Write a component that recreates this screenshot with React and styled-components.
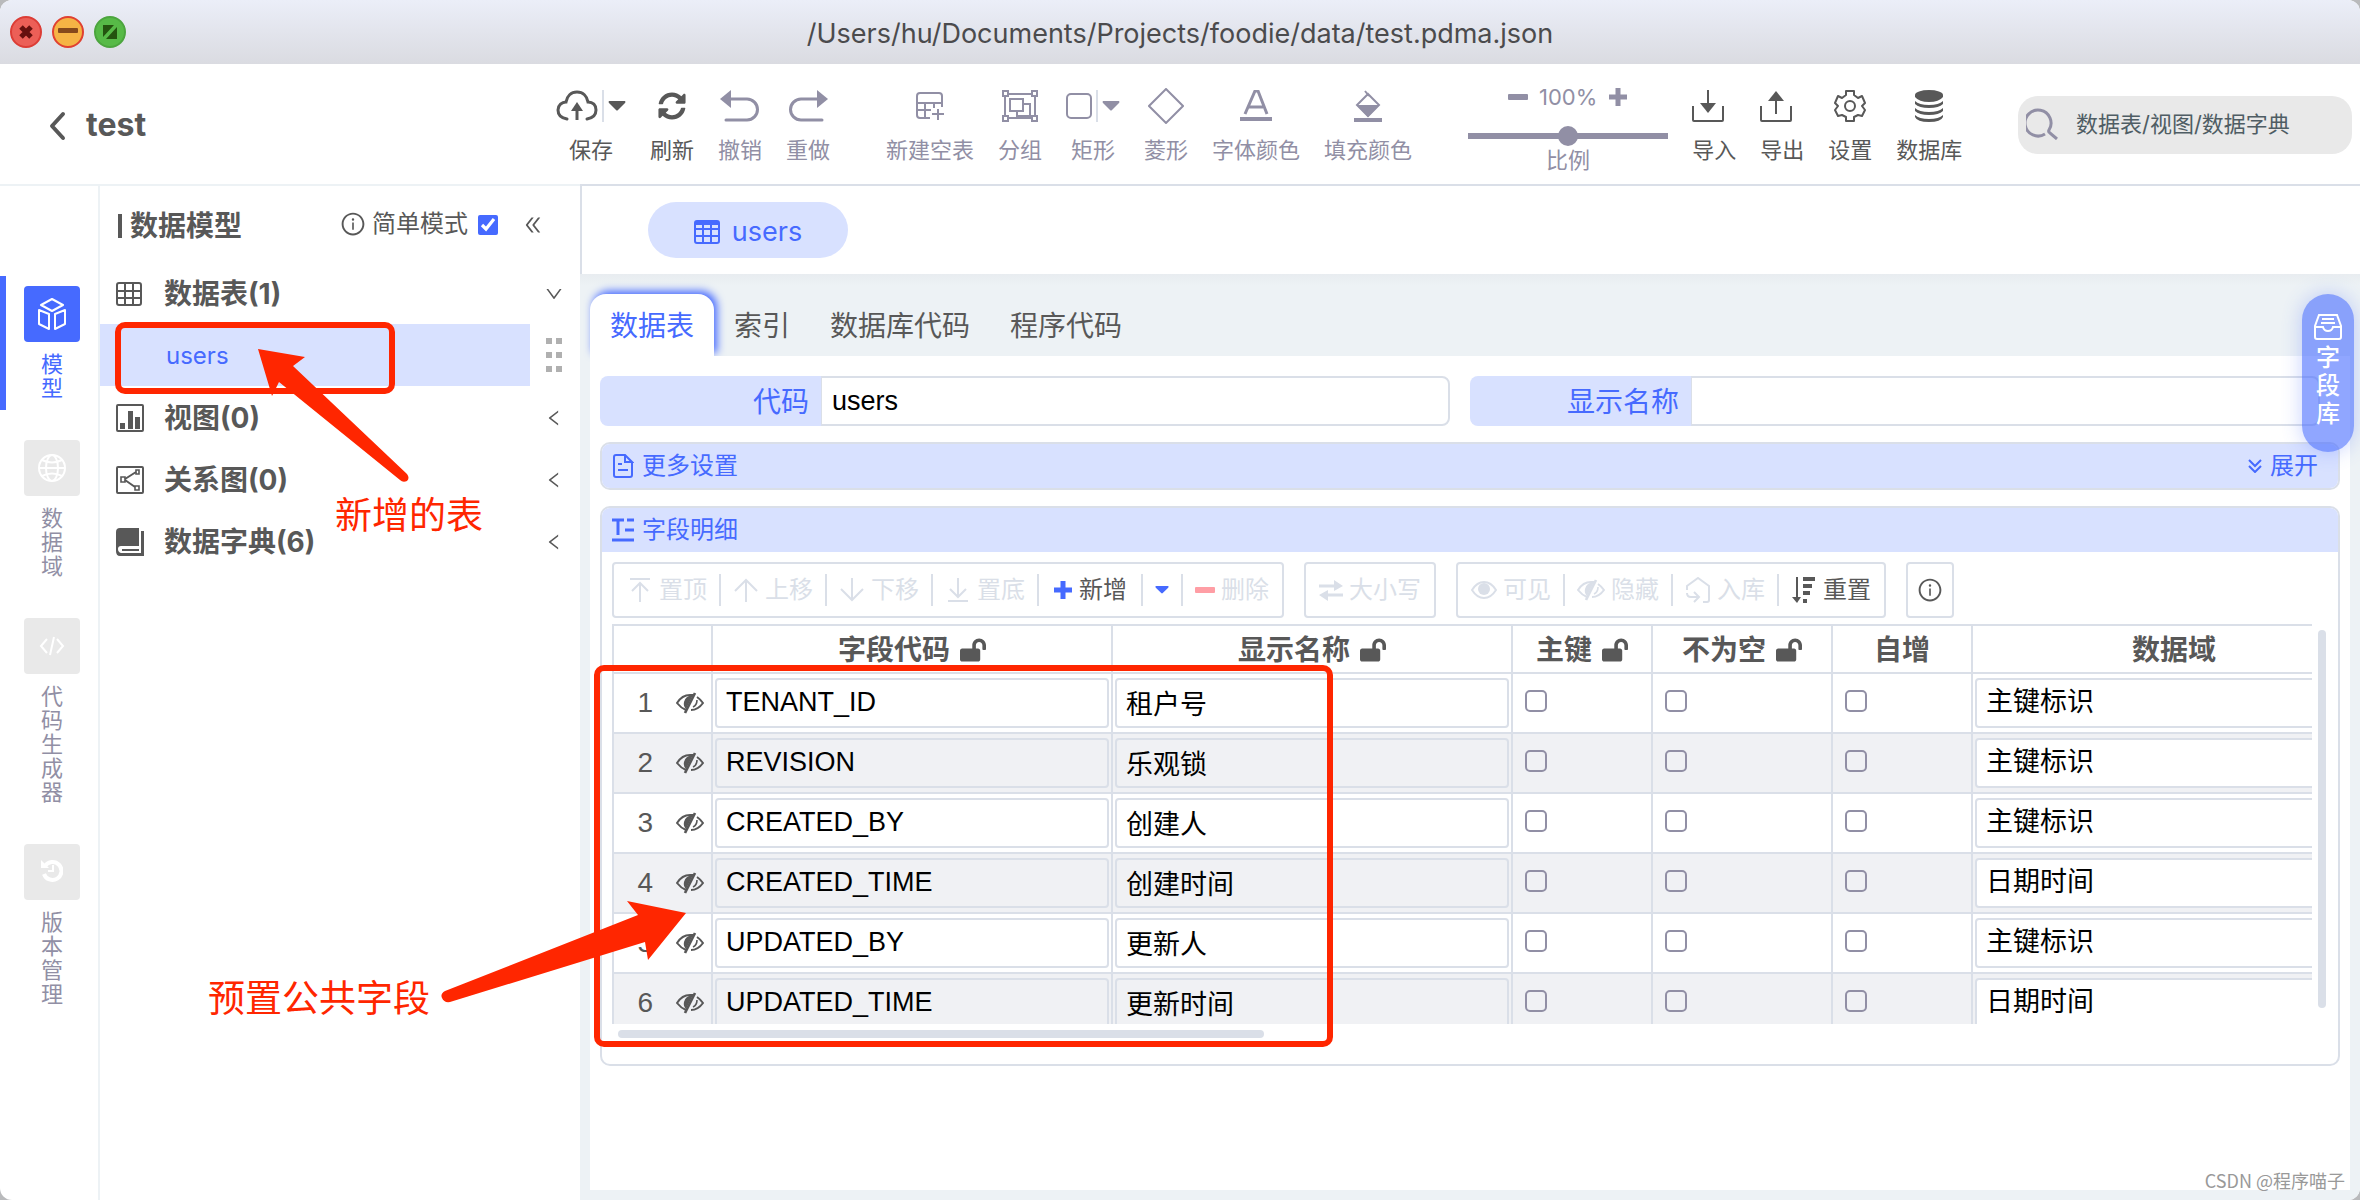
import React from 'react';
import styled, { createGlobalStyle, css } from 'styled-components';
import { FaSyncAlt, FaLockOpen } from 'react-icons/fa';
import {
  AiOutlineInfoCircle,
  AiOutlineDoubleLeft,
  AiOutlineDown,
  AiOutlineLeft,
} from 'react-icons/ai';

const blue = '#466aff';
const dark = '#585858';
const muted = '#918fa5';
const line = '#dadfe8';
const pale = '#d8e1ff';
const gray = '#edf2f5';
const red = '#ff2600';

const GlobalStyle = createGlobalStyle`
  * { box-sizing: border-box; }
  body {
    margin: 0;
    background: #b9babc;
    color: ${dark};
    font-family: Inter, 'Noto Sans CJK SC', sans-serif;
    font-size: 24px;
    line-height: 32px;
  }
  button, input, select { font: inherit; color: inherit; margin: 0; }
  button { padding: 0; border: 0; background: none; cursor: pointer; }
  svg { display: block; flex: none; }
`;

// === ICONS ===

const Icon = ({ w, h = w, children }) => (
  <svg
    width={w}
    height={h}
    viewBox={`0 0 ${w} ${h}`}
    fill="none"
    stroke="currentColor"
    strokeWidth="2"
    aria-hidden="true"
  >
    {children}
  </svg>
);

const solid = { fill: 'currentColor', stroke: 'none' };

const CloseGlyph = () => (
  <Icon w={16}><path d="M3 3l10 10M13 3L3 13" strokeWidth="5" /></Icon>
);
const MinimizeGlyph = () => (
  <Icon w={20} h={8}><rect x="0" y="0" width="20" height="5" rx="1" {...solid} /></Icon>
);
const FullscreenGlyph = () => (
  <Icon w={16}><path d="M1 1h11L1 13zM15 3v12H4z" {...solid} /></Icon>
);
const BackIcon = () => (
  <Icon w={18} h={30}><path d="M15 3L4 15l11 12" strokeWidth="4" strokeLinecap="round" strokeLinejoin="round" /></Icon>
);
const CloudIcon = () => (
  <Icon w={42} h={32}>
    <path d="M11 29C5 28 2 25 2 20c0-5 4-8 8-8 1-6 5-10 11-10s10 4 11 10c5 0 8 3 8 8 0 5-3 8-9 9" strokeWidth="3" strokeLinecap="round" />
    <path d="M21 30V18" strokeWidth="3" />
    <path d="M21 12l6 9H15z" {...solid} />
  </Icon>
);
const CaretIcon = ({ w = 18, h = 10 }) => (
  <svg width={w} height={h} viewBox="0 0 18 10" fill="currentColor" aria-hidden="true">
    <path d="M1 0h16q1 1 0 2l-7 7q-1 1-2 0L1 2q-1-1 0-2z" />
  </svg>
);
const UndoIcon = () => (
  <Icon w={40} h={32}>
    <path d="M11 9h16a10 10 0 010 21H6" strokeWidth="3" strokeLinecap="round" />
    <path d="M0 9L11 0v18z" {...solid} />
  </Icon>
);
const RedoIcon = () => (
  <Icon w={40} h={32}>
    <path d="M29 9H13a10 10 0 000 21h21" strokeWidth="3" strokeLinecap="round" />
    <path d="M40 9L29 0v18z" {...solid} />
  </Icon>
);
const NewTableIcon = () => (
  <Icon w={28}>
    <path d="M26 15V4q0-3-3-3H4Q1 1 1 4v19q0 3 3 3h10M1 11h25M1 18h14M9 11v15M18 11v5" />
    <path d="M22 17v11M16 22h12" />
  </Icon>
);
const GroupIcon = () => (
  <Icon w={38} h={32}>
    <path d="M6 4h26M6 28h26M4 6v20M34 6v20" />
    <path d="M2 1h5v5H2zM31 1h5v5h-5zM2 26h5v5H2zM31 26h5v5h-5z" />
    <path d="M9 9h13v12H9zM22 14h7v12H16v-5" />
  </Icon>
);
const RectIcon = () => (
  <Icon w={26}><rect x="1" y="1" width="24" height="24" rx="4" /></Icon>
);
const DiamondIcon = () => (
  <Icon w={36}><path d="M18 1l17 17-17 17L1 18z" /></Icon>
);
const FontColorIcon = () => (
  <Icon w={32}>
    <path d="M5 24L15 1h3l9 23M9 17h14" strokeWidth="3" />
    <path d="M0 27h32v4H0z" {...solid} />
  </Icon>
);
const FillColorIcon = () => (
  <Icon w={30} h={32}>
    <path d="M12 1l4 5M15 4L4 15l11 11 11-11L15 4z" />
    <path d="M4 15h22L15 27z" {...solid} />
    <path d="M1 28h28v4H1z" {...solid} />
  </Icon>
);
const MinusIcon = ({ w = 20 }) => (
  <Icon w={w} h={6}><rect width={w} height="6" rx="1" {...solid} /></Icon>
);
const PlusIcon = () => (
  <Icon w={20}><path d="M10 1v18M1 10h18" strokeWidth="5" /></Icon>
);
const ImportIcon = () => (
  <Icon w={32}>
    <path d="M1 16v14q0 1 1 1h28q1 0 1-1V16M16 0v14" />
    <path d="M8 13h16l-8 10z" {...solid} />
  </Icon>
);
const ExportIcon = () => (
  <Icon w={32}>
    <path d="M1 16v14q0 1 1 1h28q1 0 1-1V16M16 24V8" />
    <path d="M8 11h16L16 1z" {...solid} />
  </Icon>
);
const GearIcon = () => (
  <Icon w={32}>
    <path d="M12 1h8v4l4 3 4-2 3 7-3 3 3 4-3 6-4-1-4 2v4h-8v-4l-4-2-4 1-3-6 3-4-3-3 3-7 4 2 4-3z" strokeLinejoin="round" />
    <circle cx="16" cy="16" r="5" />
  </Icon>
);
const DatabaseIcon = () => (
  <Icon w={28} h={32}>
    <ellipse cx="14" cy="5" rx="14" ry="5" {...solid} />
    <path d="M0 5h28v2q-4 5-14 5T0 7z" {...solid} />
    <path d="M0 11q4 4 14 4t14-4v3q-4 4-14 4T0 14zM0 18q4 4 14 4t14-4v3q-4 4-14 4T0 21zM0 25q4 4 14 4t14-4v2q-2 5-14 5T0 27z" {...solid} />
  </Icon>
);
const SearchIcon = () => (
  <Icon w={32}>
    <path d="M19 26a13 13 0 114-4q-1 2 1 3l7 6" strokeWidth="3" />
  </Icon>
);
const CubeIcon = () => (
  <Icon w={28} h={32}>
    <path d="M14 1l11 6-11 6L3 7z" strokeLinejoin="round" />
    <path d="M1 12l10 4v15L1 26zM27 12l-10 4v15l10-5z" strokeLinejoin="round" />
  </Icon>
);
const GlobeIcon = () => (
  <Icon w={28}>
    <circle cx="14" cy="14" r="13" />
    <ellipse cx="14" cy="14" rx="6" ry="13" />
    <path d="M1 14h26M4 6q10 5 20 0M4 22q10-5 20 0" />
  </Icon>
);
const CodeIcon = () => (
  <Icon w={26} h={20}><path d="M8 3l-6 7 6 7M18 3l6 7-6 7M15 1l-4 18" /></Icon>
);
const HistoryIcon = () => (
  <Icon w={22} h={26}>
    <path d="M4 7a9 9 0 11-1 8" strokeWidth="4" />
    <path d="M0 1l8 8H0z" {...solid} />
    <path d="M12 6v6H7" />
  </Icon>
);
const TableIcon = ({ header }) => (
  <Icon w={26} h={24}>
    <rect x="1" y="1" width="24" height="22" rx="2" />
    <path d="M1 9h24M1 16h24M9 2v21M17 2v21" />
    {header && <path d="M1 1h24v4H1z" {...solid} />}
  </Icon>
);
const ViewIcon = () => (
  <Icon w={28}>
    <rect x="1" y="1" width="26" height="26" rx="1" />
    <path d="M4 19h5v6H4zM12 7h5v18h-5zM19 13h5v12h-5z" {...solid} />
  </Icon>
);
const RelationIcon = () => (
  <Icon w={28}>
    <rect x="1" y="1" width="26" height="26" rx="1" />
    <path d="M9 13L20 6M9 14l10 7" />
    <path d="M5 11h4v5H5zM20 4h3v4h-3zM19 20h4v4h-4z" strokeWidth="1.6" />
  </Icon>
);
const DictIcon = () => (
  <Icon w={28}>
    <path d="M4 0h19v18H5q-3 0-3 3t3 4h20V3h3v25H4q-4 0-4-5V4q0-4 4-4z" {...solid} />
    <path d="M6 22h17" />
  </Icon>
);
const DocIcon = () => (
  <Icon w={22} h={24}>
    <path d="M13 1H4Q2 1 2 3v18q0 2 2 2h14q2 0 2-2V9M13 1l7 7h-7zM6 10h4M6 16h10" />
  </Icon>
);
const TextIcon = () => (
  <Icon w={22} h={24}>
    <path d="M0 2h12M15 2h7M6 2v15M13 12h9M0 22h22" strokeWidth="3" />
  </Icon>
);
const DoubleDownIcon = () => (
  <Icon w={14}><path d="M1 1l6 6 6-6M1 7l6 6 6-6" /></Icon>
);
const BoxIcon = () => (
  <Icon w={28} h={26}>
    <path d="M5 1h18l4 11v11q0 2-2 2H3q-2 0-2-2V12zM8 5h12M7 9h14M1 13h8q1 4 5 4t5-4h8" />
  </Icon>
);
const TopIcon = () => (
  <Icon w={26}><path d="M3 2h20M13 25V6M5 14l8-8 8 8" /></Icon>
);
const UpIcon = () => (
  <Icon w={26}><path d="M13 25V3M2 14L13 3l11 11" /></Icon>
);
const DownIcon = () => (
  <Icon w={26}><path d="M13 1v22M2 12l11 11 11-11" /></Icon>
);
const BottomIcon = () => (
  <Icon w={26}><path d="M3 24h20M13 1v19M5 12l8 8 8-8" /></Icon>
);
const SwapIcon = () => (
  <Icon w={24}>
    <path d="M0 8h17M24 17H7" strokeWidth="3" />
    <path d="M15 2l9 6-9 5zM9 12l-9 5 9 6z" {...solid} />
  </Icon>
);
const EyeIcon = () => (
  <Icon w={26} h={20}>
    <path d="M1 10Q6 2 13 2t12 8q-5 8-12 8T1 10z" />
    <circle cx="13" cy="9" r="6" {...solid} />
  </Icon>
);
const HiddenIcon = () => (
  <Icon w={28} h={22}>
    <path d="M10 18Q5 16 1 11 6 3 14 3l3 0M21 5q3 2 6 6-5 7-12 7" />
    <path d="M17 3l-7 14q-3-3-2-7 1-6 9-7z" {...solid} />
    <path d="M19 1L9 21" strokeWidth="2.6" />
    <path d="M21 8q0 5-4 7" strokeWidth="1.6" />
  </Icon>
);
const StoreIcon = () => (
  <Icon w={26}>
    <path d="M2 13V9L13 1l11 8v14q0 2-2 2h-4M2 16q0 4 4 4h7M9 15l5 5-5 5" />
  </Icon>
);
const ResetIcon = () => (
  <Icon w={26}>
    <path d="M6 0v22" />
    <path d="M1 20h9l-4 6z" {...solid} />
    <path d="M12 2h12M12 9h9M12 16h7M12 24h4" strokeWidth="4" />
  </Icon>
);

// === DATA ===

const modules = [
  { name: '模型', icon: <CubeIcon />, active: true },
  { name: '数据域', icon: <GlobeIcon /> },
  { name: '代码生成器', icon: <CodeIcon /> },
  { name: '版本管理', icon: <HistoryIcon /> },
];

const treeTail = [
  { name: '视图(0)', icon: <ViewIcon /> },
  { name: '关系图(0)', icon: <RelationIcon /> },
  { name: '数据字典(6)', icon: <DictIcon /> },
];

const editTools = [
  { name: '刷新', icon: <FaSyncAlt size={28} /> },
  { name: '撤销', icon: <UndoIcon />, off: true },
  { name: '重做', icon: <RedoIcon />, off: true },
];

const fileTools = [
  { name: '导入', icon: <ImportIcon />, align: 'flex-start' },
  { name: '导出', icon: <ExportIcon />, align: 'flex-start' },
  { name: '设置', icon: <GearIcon /> },
  { name: '数据库', icon: <DatabaseIcon /> },
];

const moveActions = [
  { name: '置顶', icon: <TopIcon /> },
  { name: '上移', icon: <UpIcon /> },
  { name: '下移', icon: <DownIcon /> },
  { name: '置底', icon: <BottomIcon /> },
];

const columns = [
  { name: '', width: 99 },
  { name: '字段代码', width: 400, lock: true },
  { name: '显示名称', width: 400, lock: true },
  { name: '主键', width: 140, lock: true },
  { name: '不为空', width: 180, lock: true },
  { name: '自增', width: 140 },
  { name: '数据域', width: 404 },
];

const fields = [
  { code: 'TENANT_ID', label: '租户号', domain: '主键标识' },
  { code: 'REVISION', label: '乐观锁', domain: '主键标识' },
  { code: 'CREATED_BY', label: '创建人', domain: '主键标识' },
  { code: 'CREATED_TIME', label: '创建时间', domain: '日期时间' },
  { code: 'UPDATED_BY', label: '更新人', domain: '主键标识' },
  { code: 'UPDATED_TIME', label: '更新时间', domain: '日期时间' },
];

const Tool = ({ name, icon, off, align }) => (
  <ToolButton type="button" $off={off}>
    <ToolIcon $align={align}>{icon}</ToolIcon>
    {name}
  </ToolButton>
);

const SplitTool = ({ name, icon, off }) => (
  <SplitWrapper $off={off}>
    <ToolIcon>
      <button type="button" aria-label={name}>{icon}</button>
      <ToolDivider />
      <button type="button" aria-label={`${name} ▾`}><CaretIcon /></button>
    </ToolIcon>
    {name}
  </SplitWrapper>
);

const App = () => {
  return (
    <>
      <GlobalStyle />
      <AppWindow>
        <TitleBar>
          <WindowButton type="button" aria-label="close" $fill="#ec5f57" $edge="#dc3d36" $glyph="#66100e"><CloseGlyph /></WindowButton>
          <WindowButton type="button" aria-label="minimize" $fill="#f5b445" $edge="#e04131" $glyph="#85491b"><MinimizeGlyph /></WindowButton>
          <WindowButton type="button" aria-label="zoom" $fill="#57ba47" $edge="#4ca53e" $glyph="#24540f"><FullscreenGlyph /></WindowButton>
          <WindowTitle>/Users/hu/Documents/Projects/foodie/data/test.pdma.json</WindowTitle>
        </TitleBar>

        <Header>
          <Brand>
            <button type="button" aria-label="back"><BackIcon /></button>
            <ProjectName>test</ProjectName>
          </Brand>
          <ToolGroups>
            <ToolGroup>
              <SplitTool name="保存" icon={<CloudIcon />} />
              {editTools.map((tool) => <Tool key={tool.name} {...tool} />)}
            </ToolGroup>
            <ToolGroup>
              <Tool name="新建空表" icon={<NewTableIcon />} off />
              <Tool name="分组" icon={<GroupIcon />} off />
              <SplitTool name="矩形" icon={<RectIcon />} off />
              <Tool name="菱形" icon={<DiamondIcon />} off />
              <Tool name="字体颜色" icon={<FontColorIcon />} off />
              <Tool name="填充颜色" icon={<FillColorIcon />} off />
            </ToolGroup>
            <ToolGroup>
              <ZoomTool>
                <ZoomValue>
                  <button type="button" aria-label="zoom out"><MinusIcon /></button>
                  100%
                  <button type="button" aria-label="zoom in"><PlusIcon /></button>
                </ZoomValue>
                <ZoomSlider id="scale" type="range" min="0" max="200" defaultValue="100" />
                <label htmlFor="scale">比例</label>
              </ZoomTool>
              {fileTools.map((tool) => <Tool key={tool.name} {...tool} />)}
            </ToolGroup>
          </ToolGroups>
          <SearchBox>
            <SearchIcon />
            <SearchInput type="text" aria-label="数据表/视图/数据字典" placeholder="数据表/视图/数据字典" />
          </SearchBox>
        </Header>

        <Body>
          <Rail>
            {modules.map((item) => (
              <RailItem key={item.name} type="button" $active={item.active}>
                <RailTile $active={item.active}>{item.icon}</RailTile>
                <RailLabel>{item.name}</RailLabel>
              </RailItem>
            ))}
          </Rail>

          <Tree>
            <TreeHeader>
              <TreeTitle>数据模型</TreeTitle>
              <SimpleMode>
                <AiOutlineInfoCircle size={26} />
                简单模式
                <ModeCheck type="checkbox" defaultChecked />
              </SimpleMode>
              <button type="button" aria-label="collapse"><AiOutlineDoubleLeft size={22} /></button>
            </TreeHeader>
            <TreeRow type="button">
              <TreeIcon><TableIcon /></TreeIcon>
              数据表(1)
              <AiOutlineDown size={20} />
            </TreeRow>
            <TreeLeaf href="#users">users</TreeLeaf>
            {treeTail.map((item) => (
              <TreeRow key={item.name} type="button">
                <TreeIcon>{item.icon}</TreeIcon>
                {item.name}
                <AiOutlineLeft size={20} />
              </TreeRow>
            ))}
            <DragHandle><i /><i /><i /><i /><i /><i /></DragHandle>
          </Tree>

          <Workspace>
            <FileTabs>
              <FileTab type="button"><TableIcon header />users</FileTab>
            </FileTabs>
            <SectionTabs>
              <SectionTab type="button" $active>数据表</SectionTab>
              <SectionTab type="button">索引</SectionTab>
              <SectionTab type="button">数据库代码</SectionTab>
              <SectionTab type="button">程序代码</SectionTab>
            </SectionTabs>

            <Panel>
              <FormRow>
                <Field>
                  <FieldLabel htmlFor="code">代码</FieldLabel>
                  <FieldInput id="code" type="text" defaultValue="users" />
                </Field>
                <Field>
                  <FieldLabel htmlFor="label">显示名称</FieldLabel>
                  <FieldInput id="label" type="text" />
                </Field>
              </FormRow>

              <Section>
                <SectionHeader>
                  <DocIcon />
                  更多设置
                  <ExpandButton type="button"><DoubleDownIcon />展开</ExpandButton>
                </SectionHeader>
              </Section>

              <Section>
                <SectionHeader><TextIcon />字段明细</SectionHeader>
                <SectionBody>
                  <Actions>
                    <ActionGroup>
                      {moveActions.map((action) => (
                        <ActionButton key={action.name} type="button" disabled>
                          {action.icon}{action.name}
                        </ActionButton>
                      ))}
                      <ActionButton type="button" $accent={blue} $wide><PlusIcon />新增</ActionButton>
                      <ActionButton type="button" $accent={blue} aria-label="新增 ▾"><CaretIcon w={14} h={10} /></ActionButton>
                      <ActionButton type="button" disabled $accent="#ff9ea5"><MinusIcon />删除</ActionButton>
                    </ActionGroup>
                    <ActionGroup>
                      <ActionButton type="button" disabled><SwapIcon />大小写</ActionButton>
                    </ActionGroup>
                    <ActionGroup>
                      <ActionButton type="button" disabled><EyeIcon />可见</ActionButton>
                      <ActionButton type="button" disabled><HiddenIcon />隐藏</ActionButton>
                      <ActionButton type="button" disabled><StoreIcon />入库</ActionButton>
                      <ActionButton type="button"><ResetIcon />重置</ActionButton>
                    </ActionGroup>
                    <InfoButton type="button" aria-label="info"><AiOutlineInfoCircle size={26} /></InfoButton>
                  </Actions>

                  <TableArea>
                    <TableViewport>
                      <FieldTable>
                        <colgroup>
                          {columns.map((col) => <col key={col.name} width={col.width} />)}
                        </colgroup>
                        <thead>
                          <tr>
                            {columns.map((col) => (
                              <HeadCell key={col.name}>
                                <HeadContent>{col.name}{col.lock && <FaLockOpen size={26} />}</HeadContent>
                              </HeadCell>
                            ))}
                          </tr>
                        </thead>
                        <tbody>
                          {fields.map((field, index) => (
                            <FieldRow key={field.code}>
                              <Cell>
                                <RowIndex>{index + 1}<HiddenIcon /></RowIndex>
                              </Cell>
                              <Cell><CellInput type="text" aria-label="字段代码" defaultValue={field.code} /></Cell>
                              <Cell><CellInput type="text" aria-label="显示名称" defaultValue={field.label} /></Cell>
                              {['主键', '不为空', '自增'].map((flag) => (
                                <Cell key={flag}><CellCheck type="checkbox" aria-label={flag} /></Cell>
                              ))}
                              <Cell>
                                <CellSelect aria-label="数据域" defaultValue={field.domain}>
                                  <option>主键标识</option>
                                  <option>日期时间</option>
                                </CellSelect>
                              </Cell>
                            </FieldRow>
                          ))}
                        </tbody>
                      </FieldTable>
                    </TableViewport>
                    <VerticalThumb />
                    <HorizontalThumb />
                  </TableArea>
                </SectionBody>
              </Section>
            </Panel>
            <FieldLibrary type="button">
              <BoxIcon />
              <LibraryLabel>字段库</LibraryLabel>
            </FieldLibrary>
          </Workspace>
        </Body>

        <TableMark />
        <FieldsMark />
        <Arrows width="700" height="1010" viewBox="0 0 700 1010" fill={red} aria-hidden="true">
          <path d="M258 349L305 357 293 366 407 474Q410 478 407 481 403 483 400 480L279 382 272 396z" />
          <path d="M686 913L627 901 638 915 445 991Q440 994 442 998 444 1003 450 1002L645 942 648 960z" />
        </Arrows>
        <TableNote>新增的表</TableNote>
        <FieldsNote>预置公共字段</FieldsNote>
        <Watermark>CSDN @程序喵子</Watermark>
      </AppWindow>
    </>
  );
};

// === WINDOW ===

const AppWindow = styled.div`
  position: relative;
  display: flex;
  flex-direction: column;
  min-height: 100vh;
  background: #fff;
  border-radius: 12px;
  overflow: hidden;
`;

const TitleBar = styled.div`
  position: relative;
  display: flex;
  align-items: center;
  gap: 10px;
  height: 64px;
  padding: 0 10px;
  background: linear-gradient(#ebeef8, #dadbe1);
`;

const WindowButton = styled.button`
  display: flex;
  align-items: center;
  justify-content: center;
  width: 32px;
  height: 32px;
  border: 2px solid ${({ $edge }) => $edge};
  border-radius: 50%;
  background: ${({ $fill }) => $fill};
  color: ${({ $glyph }) => $glyph};
`;

const WindowTitle = styled.div`
  position: absolute;
  inset: 0;
  line-height: 68px;
  font-size: 27px;
  text-align: center;
  color: #4b4b4d;
  pointer-events: none;
`;

// === HEADER ===

const Header = styled.header`
  display: flex;
  align-items: flex-start;
  height: 120px;
  padding-right: 8px;
`;

const Brand = styled.div`
  display: flex;
  align-items: center;
  gap: 20px;
  flex: 0 0 556px;
  height: 124px;
  padding-left: 48px;
`;

const ProjectName = styled.h1`
  margin: 0;
  padding-bottom: 2px;
  font-size: 32px;
  line-height: 40px;
`;

const ToolGroups = styled.div`
  display: flex;
  gap: 56px;
  padding-top: 22px;
`;

const ToolGroup = styled.div`
  display: flex;
  gap: 24px;
`;

const toolItem = css`
  display: flex;
  flex-direction: column;
  align-items: center;
  gap: 12px;
  font-size: 22px;
  line-height: 24px;
  white-space: nowrap;
  color: ${({ $off }) => ($off ? muted : dark)};
`;

const ToolButton = styled.button`
  ${toolItem}
`;

const SplitWrapper = styled.div`
  ${toolItem}
`;

const ToolIcon = styled.span`
  display: flex;
  align-items: center;
  align-self: ${({ $align }) => $align || 'center'};
  gap: 4px;
  height: 40px;
`;

const ToolDivider = styled.span`
  width: 2px;
  height: 32px;
  background: ${line};
`;

const ZoomTool = styled.div`
  display: flex;
  flex-direction: column;
  align-items: center;
  width: 200px;
  font-size: 22px;
  line-height: 24px;
  color: ${muted};
`;

const ZoomValue = styled.div`
  display: flex;
  align-items: center;
  gap: 11px;
  height: 22px;
`;

const ZoomSlider = styled.input`
  appearance: none;
  width: 100%;
  height: 20px;
  margin: 18px 0 2px;
  background: linear-gradient(${muted}, ${muted}) center / 100% 6px no-repeat;

  &::-webkit-slider-thumb {
    appearance: none;
    width: 20px;
    height: 20px;
    border-radius: 50%;
    background: ${muted};
  }
`;

const SearchBox = styled.label`
  display: flex;
  align-items: center;
  gap: 18px;
  width: 334px;
  height: 58px;
  margin: 32px 0 0 auto;
  padding: 0 8px 2px;
  border-radius: 20px;
  background: #e9e9e9;
  color: ${muted};
`;

const SearchInput = styled.input`
  flex: 1;
  min-width: 0;
  padding: 0;
  border: 0;
  background: none;
  font-size: 22px;

  &::placeholder {
    color: #4f5d64;
    opacity: 1;
  }
`;

// === LEFT SIDE ===

const Body = styled.div`
  display: flex;
  flex: 1;
`;

const Rail = styled.nav`
  display: flex;
  flex-direction: column;
  gap: 20px;
  flex: 0 0 100px;
  padding-top: 90px;
  border-top: 2px solid ${gray};
  border-right: 2px solid ${gray};
`;

const RailItem = styled.button`
  display: flex;
  flex-direction: column;
  align-items: center;
  gap: 10px;
  padding: 10px 0;
  border-left: 6px solid ${({ $active }) => ($active ? blue : 'transparent')};
  color: ${({ $active }) => ($active ? blue : muted)};
`;

const RailTile = styled.span`
  display: flex;
  align-items: center;
  justify-content: center;
  width: 56px;
  height: 56px;
  border-radius: 4px;
  background: ${({ $active }) => ($active ? blue : '#e9e9e9')};
  color: #fff;
`;

const RailLabel = styled.span`
  width: 22px;
  font-size: 22px;
  line-height: 24px;
  word-break: break-all;
`;

const Tree = styled.aside`
  position: relative;
  flex: 0 0 480px;
  border-top: 2px solid ${gray};
`;

const TreeHeader = styled.div`
  display: flex;
  align-items: center;
  height: 76px;
  padding: 2px 36px 0 18px;
`;

const TreeTitle = styled.h2`
  display: flex;
  align-items: center;
  gap: 8px;
  margin: 0 auto 0 0;
  padding-top: 2px;
  font-size: 28px;
  line-height: 40px;

  &::before {
    content: '';
    width: 4px;
    height: 24px;
    background: ${dark};
  }
`;

const SimpleMode = styled.label`
  display: flex;
  align-items: center;
  gap: 6px;
  margin-right: 24px;
  padding-bottom: 2px;
`;

const ModeCheck = styled.input`
  width: 20px;
  height: 20px;
  margin: 2px 0 0 4px;
  accent-color: ${blue};
`;

const TreeRow = styled.button`
  display: flex;
  align-items: center;
  width: 100%;
  height: 62px;
  padding: 2px 16px 0;
  font-size: 28px;
  font-weight: 700;

  > svg {
    margin-left: auto;
  }
`;

const TreeIcon = styled.span`
  width: 48px;
`;

const TreeLeaf = styled.a`
  display: block;
  height: 62px;
  margin-right: 50px;
  padding-left: 66px;
  background: ${pale};
  color: ${blue};
  line-height: 64px;
  text-decoration: none;
`;

const DragHandle = styled.div`
  position: absolute;
  top: 152px;
  right: 18px;
  display: grid;
  grid-template-columns: 6px 6px;
  gap: 8px 4px;

  i {
    height: 6px;
    background: #b0b0b0;
  }
`;

// === WORKSPACE ===

const Workspace = styled.main`
  position: relative;
  display: flex;
  flex-direction: column;
  flex: 1;
  min-width: 0;
  border-top: 2px solid ${line};
  background: ${gray};
`;

const FileTabs = styled.div`
  height: 88px;
  padding: 16px 66px;
  border-left: 2px solid ${line};
  background: #fff;
`;

const FileTab = styled.button`
  display: flex;
  align-items: center;
  justify-content: center;
  gap: 12px;
  width: 200px;
  height: 56px;
  padding-top: 4px;
  border-radius: 28px;
  background: ${pale};
  color: ${blue};
  font-size: 27px;
`;

const SectionTabs = styled.div`
  display: flex;
  padding: 20px 10px 0;
  background: linear-gradient(#e8ecf0, ${gray} 12px);
`;

const SectionTab = styled.button`
  height: 62px;
  padding: 2px 20px 0;
  font-size: 28px;
  ${({ $active }) => $active && css`
    border-radius: 16px 16px 0 0;
    background: #fff;
    color: ${blue};
    box-shadow: 3px -3px 8px ${blue};
  `}
`;

const Panel = styled.div`
  position: relative;
  display: flex;
  flex-direction: column;
  gap: 16px;
  flex: 1;
  margin: 0 10px 10px;
  padding: 20px 10px;
  background: #fff;
`;

const FormRow = styled.div`
  display: grid;
  grid-template-columns: 1fr 1fr;
  gap: 20px;
  padding-right: 20px;
`;

const Field = styled.div`
  display: flex;
  height: 50px;
`;

const FieldLabel = styled.label`
  flex: 0 0 221px;
  padding-right: 12px;
  border-radius: 8px 0 0 8px;
  background: ${pale};
  color: ${blue};
  font-size: 28px;
  line-height: 52px;
  text-align: right;
`;

const inputText = css`
  color: #000;
  font-family: 'Liberation Sans', 'Noto Sans CJK SC', sans-serif;
  font-size: 27px;
`;

const FieldInput = styled.input`
  flex: 1;
  min-width: 0;
  padding: 0 10px;
  border: 2px solid ${line};
  border-left-width: 1px;
  border-radius: 0 8px 8px 0;
  ${inputText}
`;

const Section = styled.section`
  border: 2px solid ${line};
  border-radius: 10px;
  overflow: hidden;
`;

const SectionHeader = styled.div`
  display: flex;
  align-items: center;
  gap: 8px;
  height: 44px;
  padding: 0 20px 0 10px;
  background: ${pale};
  color: ${blue};
`;

const ExpandButton = styled.button`
  display: flex;
  align-items: center;
  gap: 8px;
  margin-left: auto;
`;

const SectionBody = styled.div`
  padding: 10px 12px 26px 10px;
`;

const Actions = styled.div`
  display: flex;
  gap: 20px;
  margin-bottom: 6px;
`;

const ActionGroup = styled.div`
  display: flex;
  align-items: center;
  height: 56px;
  padding: 0 1px;
  border: 2px solid ${line};
  border-radius: 4px;
`;

const ActionButton = styled.button`
  display: flex;
  align-items: center;
  gap: 6px;
  height: 32px;
  padding: 0 ${({ $wide }) => ($wide ? 14 : 12)}px;
  white-space: nowrap;

  & + & {
    border-left: 2px solid ${line};
  }

  &:disabled {
    color: ${line};
  }

  svg {
    color: ${({ $accent }) => $accent || 'inherit'};
  }
`;

const InfoButton = styled.button`
  display: flex;
  align-items: center;
  justify-content: center;
  width: 48px;
  border: 2px solid ${line};
  border-radius: 4px;
`;

const TableArea = styled.div`
  display: grid;
  grid-template-columns: minmax(0, 1fr) 8px;
  gap: 6px;
`;

const TableViewport = styled.div`
  height: 400px;
  overflow: hidden;
`;

const FieldTable = styled.table`
  width: 1763px;
  table-layout: fixed;
  border-collapse: collapse;
`;

const HeadCell = styled.th`
  height: 48px;
  padding: 2px 0 0;
  border: 2px solid ${line};
  font-size: 28px;
`;

const HeadContent = styled.span`
  display: flex;
  align-items: center;
  justify-content: center;
  gap: 10px;
`;

const FieldRow = styled.tr`
  &:nth-child(even) {
    background: #f0f1f4;
  }
`;

const Cell = styled.td`
  height: 60px;
  padding: 2px;
  border: 2px solid ${line};
`;

const RowIndex = styled.span`
  display: flex;
  align-items: center;
  justify-content: flex-end;
  gap: 23px;
  padding-right: 5px;
  font-family: 'Liberation Sans', sans-serif;
  font-size: 28px;
`;

const cellControl = css`
  display: block;
  width: 100%;
  height: 50px;
  padding: 0 9px 2px;
  border: 2px solid ${line};
  border-radius: 4px;
  ${inputText}
`;

const CellInput = styled.input`
  ${cellControl}
  background: transparent;
`;

const CellSelect = styled.select`
  ${cellControl}
  appearance: none;
  background: #fff;
`;

const CellCheck = styled.input`
  appearance: none;
  display: block;
  width: 22px;
  height: 22px;
  margin: 0 0 4px 10px;
  border: 2px solid ${muted};
  border-radius: 5px;

  &:checked {
    background: ${blue};
  }
`;

const VerticalThumb = styled.div`
  height: 378px;
  margin-top: 6px;
  border-radius: 4px;
  background: ${line};
`;

const HorizontalThumb = styled.div`
  width: 38%;
  height: 8px;
  margin-left: 6px;
  border-radius: 4px;
  background: ${line};
`;

const FieldLibrary = styled.button`
  position: absolute;
  top: 108px;
  right: 6px;
  display: flex;
  flex-direction: column;
  align-items: center;
  justify-content: center;
  gap: 4px;
  width: 52px;
  height: 158px;
  padding-bottom: 4px;
  border-radius: 26px;
  background: rgba(70, 106, 255, 0.6);
  box-shadow: 0 0 20px rgba(70, 106, 255, 0.3);
  color: #fff;
  font-weight: 500;
`;

const LibraryLabel = styled.span`
  width: 24px;
  line-height: 28px;
  word-break: break-all;
`;

// === ANNOTATIONS ===

const Mark = styled.div`
  position: absolute;
  border: 6px solid ${red};
  border-radius: 10px;
  pointer-events: none;
`;

const TableMark = styled(Mark)`
  top: 322px;
  left: 115px;
  width: 280px;
  height: 72px;
`;

const FieldsMark = styled(Mark)`
  top: 665px;
  left: 594px;
  width: 739px;
  height: 382px;
`;

const Arrows = styled.svg`
  position: absolute;
  top: 0;
  left: 0;
  pointer-events: none;
`;

const Note = styled.div`
  position: absolute;
  font-size: 37px;
  line-height: 44px;
  color: ${red};
`;

const TableNote = styled(Note)`
  top: 494px;
  left: 335px;
`;

const FieldsNote = styled(Note)`
  top: 977px;
  left: 208px;
`;

const Watermark = styled.div`
  position: absolute;
  right: 15px;
  bottom: 8px;
  font-family: 'Noto Sans CJK SC', sans-serif;
  font-size: 18px;
  line-height: 24px;
  color: #999;
`;

export default App;
